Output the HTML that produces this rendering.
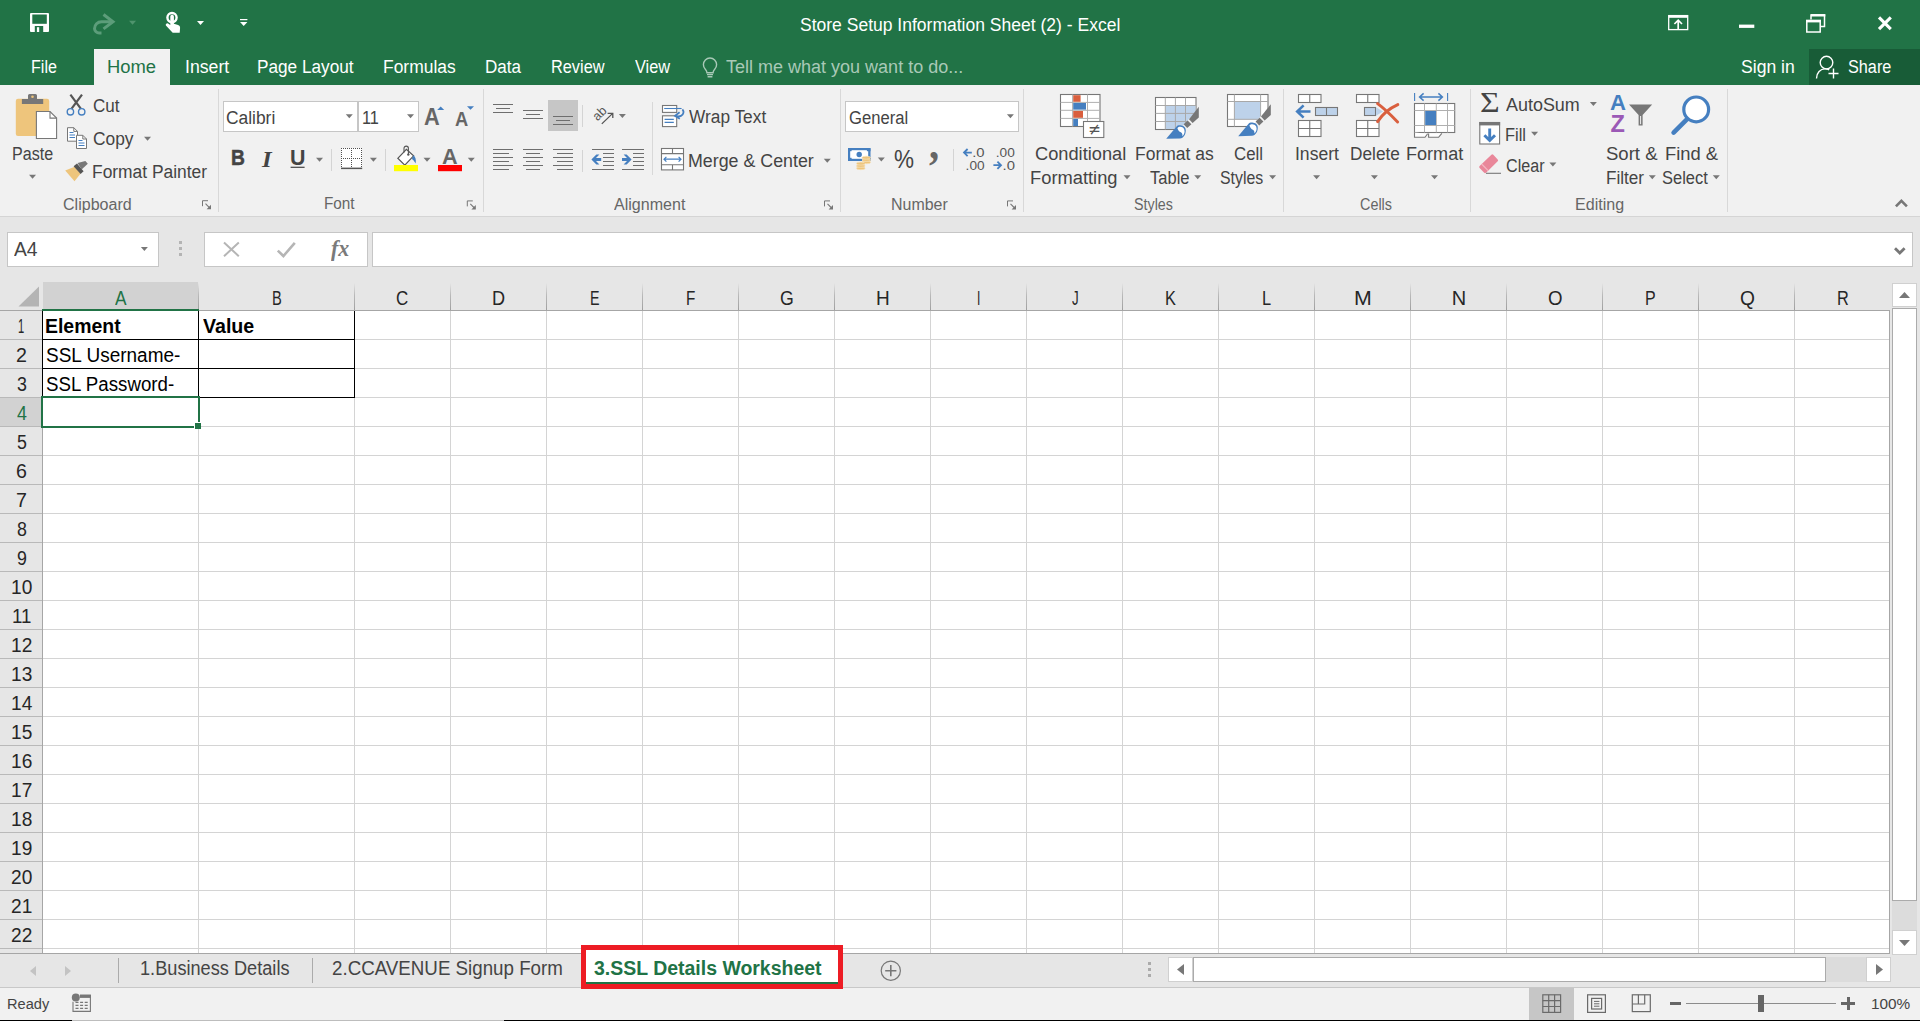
<!DOCTYPE html>
<html lang="en"><head><meta charset="utf-8"><title>Store Setup Information Sheet (2) - Excel</title>
<style>
html,body{margin:0;padding:0}
body{width:1920px;height:1021px;overflow:hidden;position:relative;background:#e6e6e6;font-family:"Liberation Sans",sans-serif}
#app{position:absolute;left:0;top:0;width:1920px;height:1021px;overflow:hidden}
#app div,#app svg{position:absolute;box-sizing:border-box}
.t{position:absolute;white-space:nowrap;line-height:1;transform-origin:0 0}
</style></head>
<body><div id="app">
<div style="left:0px;top:0px;width:1920px;height:85px;background:#217346;"></div>
<div style="left:94px;top:49px;width:76px;height:36px;background:#f1f1f1;"></div>
<div style="left:1809px;top:49px;width:111px;height:36px;background:#185c37;"></div>
<div style="left:0px;top:85px;width:1920px;height:131px;background:#f1f1f1;"></div>
<div style="left:0px;top:216px;width:1920px;height:1px;background:#d5d5d5;"></div>
<div style="left:218px;top:89px;width:1px;height:123px;background:#d8d8d8;"></div>
<div style="left:483px;top:89px;width:1px;height:123px;background:#d8d8d8;"></div>
<div style="left:840px;top:89px;width:1px;height:123px;background:#d8d8d8;"></div>
<div style="left:1023px;top:89px;width:1px;height:123px;background:#d8d8d8;"></div>
<div style="left:1283px;top:89px;width:1px;height:123px;background:#d8d8d8;"></div>
<div style="left:1470px;top:89px;width:1px;height:123px;background:#d8d8d8;"></div>
<div style="left:1727px;top:89px;width:1px;height:123px;background:#d8d8d8;"></div>
<div style="left:331px;top:149px;width:1px;height:22px;background:#d4d4d4;"></div>
<div style="left:385px;top:149px;width:1px;height:22px;background:#d4d4d4;"></div>
<div style="left:582px;top:105px;width:1px;height:22px;background:#d4d4d4;"></div>
<div style="left:582px;top:150px;width:1px;height:22px;background:#d4d4d4;"></div>
<div style="left:652px;top:102px;width:1px;height:73px;background:#d8d8d8;"></div>
<div style="left:953px;top:149px;width:1px;height:22px;background:#d4d4d4;"></div>
<div style="left:548px;top:100px;width:30px;height:31px;background:#c6c6c6;"></div>
<div style="left:223px;top:101px;width:135px;height:31px;background:#ffffff;border:1px solid #c6c6c6;"></div>
<div style="left:358px;top:101px;width:61px;height:31px;background:#ffffff;border:1px solid #c6c6c6;"></div>
<div style="left:845px;top:101px;width:174px;height:31px;background:#ffffff;border:1px solid #c6c6c6;"></div>
<div style="left:7px;top:232px;width:152px;height:35px;background:#ffffff;border:1px solid #c6c6c6;"></div>
<div style="left:204px;top:232px;width:164px;height:35px;background:#ffffff;border:1px solid #c6c6c6;"></div>
<div style="left:372px;top:232px;width:1541px;height:35px;background:#ffffff;border:1px solid #c6c6c6;"></div>
<div style="left:179px;top:241px;width:3px;height:3px;background:#b4b4b4;"></div>
<div style="left:179px;top:247px;width:3px;height:3px;background:#b4b4b4;"></div>
<div style="left:179px;top:253px;width:3px;height:3px;background:#b4b4b4;"></div>
<div style="left:43px;top:311px;width:1847px;height:642px;background:#ffffff;"></div>
<div style="left:43px;top:282px;width:155px;height:27px;background:#d2d2d2;"></div>
<div style="left:0px;top:398px;width:41px;height:28px;background:#d2d2d2;"></div>
<div style="left:43px;top:339px;width:1846px;height:1px;background:#d4d4d4;"></div>
<div style="left:0px;top:339px;width:42px;height:1px;background:#b9b9b9;"></div>
<div style="left:43px;top:368px;width:1846px;height:1px;background:#d4d4d4;"></div>
<div style="left:0px;top:368px;width:42px;height:1px;background:#b9b9b9;"></div>
<div style="left:43px;top:397px;width:1846px;height:1px;background:#d4d4d4;"></div>
<div style="left:0px;top:397px;width:42px;height:1px;background:#b9b9b9;"></div>
<div style="left:43px;top:426px;width:1846px;height:1px;background:#d4d4d4;"></div>
<div style="left:0px;top:426px;width:42px;height:1px;background:#b9b9b9;"></div>
<div style="left:43px;top:455px;width:1846px;height:1px;background:#d4d4d4;"></div>
<div style="left:0px;top:455px;width:42px;height:1px;background:#b9b9b9;"></div>
<div style="left:43px;top:484px;width:1846px;height:1px;background:#d4d4d4;"></div>
<div style="left:0px;top:484px;width:42px;height:1px;background:#b9b9b9;"></div>
<div style="left:43px;top:513px;width:1846px;height:1px;background:#d4d4d4;"></div>
<div style="left:0px;top:513px;width:42px;height:1px;background:#b9b9b9;"></div>
<div style="left:43px;top:542px;width:1846px;height:1px;background:#d4d4d4;"></div>
<div style="left:0px;top:542px;width:42px;height:1px;background:#b9b9b9;"></div>
<div style="left:43px;top:571px;width:1846px;height:1px;background:#d4d4d4;"></div>
<div style="left:0px;top:571px;width:42px;height:1px;background:#b9b9b9;"></div>
<div style="left:43px;top:600px;width:1846px;height:1px;background:#d4d4d4;"></div>
<div style="left:0px;top:600px;width:42px;height:1px;background:#b9b9b9;"></div>
<div style="left:43px;top:629px;width:1846px;height:1px;background:#d4d4d4;"></div>
<div style="left:0px;top:629px;width:42px;height:1px;background:#b9b9b9;"></div>
<div style="left:43px;top:658px;width:1846px;height:1px;background:#d4d4d4;"></div>
<div style="left:0px;top:658px;width:42px;height:1px;background:#b9b9b9;"></div>
<div style="left:43px;top:687px;width:1846px;height:1px;background:#d4d4d4;"></div>
<div style="left:0px;top:687px;width:42px;height:1px;background:#b9b9b9;"></div>
<div style="left:43px;top:716px;width:1846px;height:1px;background:#d4d4d4;"></div>
<div style="left:0px;top:716px;width:42px;height:1px;background:#b9b9b9;"></div>
<div style="left:43px;top:745px;width:1846px;height:1px;background:#d4d4d4;"></div>
<div style="left:0px;top:745px;width:42px;height:1px;background:#b9b9b9;"></div>
<div style="left:43px;top:774px;width:1846px;height:1px;background:#d4d4d4;"></div>
<div style="left:0px;top:774px;width:42px;height:1px;background:#b9b9b9;"></div>
<div style="left:43px;top:803px;width:1846px;height:1px;background:#d4d4d4;"></div>
<div style="left:0px;top:803px;width:42px;height:1px;background:#b9b9b9;"></div>
<div style="left:43px;top:832px;width:1846px;height:1px;background:#d4d4d4;"></div>
<div style="left:0px;top:832px;width:42px;height:1px;background:#b9b9b9;"></div>
<div style="left:43px;top:861px;width:1846px;height:1px;background:#d4d4d4;"></div>
<div style="left:0px;top:861px;width:42px;height:1px;background:#b9b9b9;"></div>
<div style="left:43px;top:890px;width:1846px;height:1px;background:#d4d4d4;"></div>
<div style="left:0px;top:890px;width:42px;height:1px;background:#b9b9b9;"></div>
<div style="left:43px;top:919px;width:1846px;height:1px;background:#d4d4d4;"></div>
<div style="left:0px;top:919px;width:42px;height:1px;background:#b9b9b9;"></div>
<div style="left:43px;top:948px;width:1846px;height:1px;background:#d4d4d4;"></div>
<div style="left:0px;top:948px;width:42px;height:1px;background:#b9b9b9;"></div>
<div style="left:198px;top:311px;width:1px;height:642px;background:#d4d4d4;"></div>
<div style="left:198px;top:283px;width:1px;height:27px;background:linear-gradient(#e6e6e6,#b9b9b9 45%,#9f9f9f);"></div>
<div style="left:354px;top:311px;width:1px;height:642px;background:#d4d4d4;"></div>
<div style="left:354px;top:283px;width:1px;height:27px;background:linear-gradient(#e6e6e6,#b9b9b9 45%,#9f9f9f);"></div>
<div style="left:450px;top:311px;width:1px;height:642px;background:#d4d4d4;"></div>
<div style="left:450px;top:283px;width:1px;height:27px;background:linear-gradient(#e6e6e6,#b9b9b9 45%,#9f9f9f);"></div>
<div style="left:546px;top:311px;width:1px;height:642px;background:#d4d4d4;"></div>
<div style="left:546px;top:283px;width:1px;height:27px;background:linear-gradient(#e6e6e6,#b9b9b9 45%,#9f9f9f);"></div>
<div style="left:642px;top:311px;width:1px;height:642px;background:#d4d4d4;"></div>
<div style="left:642px;top:283px;width:1px;height:27px;background:linear-gradient(#e6e6e6,#b9b9b9 45%,#9f9f9f);"></div>
<div style="left:738px;top:311px;width:1px;height:642px;background:#d4d4d4;"></div>
<div style="left:738px;top:283px;width:1px;height:27px;background:linear-gradient(#e6e6e6,#b9b9b9 45%,#9f9f9f);"></div>
<div style="left:834px;top:311px;width:1px;height:642px;background:#d4d4d4;"></div>
<div style="left:834px;top:283px;width:1px;height:27px;background:linear-gradient(#e6e6e6,#b9b9b9 45%,#9f9f9f);"></div>
<div style="left:930px;top:311px;width:1px;height:642px;background:#d4d4d4;"></div>
<div style="left:930px;top:283px;width:1px;height:27px;background:linear-gradient(#e6e6e6,#b9b9b9 45%,#9f9f9f);"></div>
<div style="left:1026px;top:311px;width:1px;height:642px;background:#d4d4d4;"></div>
<div style="left:1026px;top:283px;width:1px;height:27px;background:linear-gradient(#e6e6e6,#b9b9b9 45%,#9f9f9f);"></div>
<div style="left:1122px;top:311px;width:1px;height:642px;background:#d4d4d4;"></div>
<div style="left:1122px;top:283px;width:1px;height:27px;background:linear-gradient(#e6e6e6,#b9b9b9 45%,#9f9f9f);"></div>
<div style="left:1218px;top:311px;width:1px;height:642px;background:#d4d4d4;"></div>
<div style="left:1218px;top:283px;width:1px;height:27px;background:linear-gradient(#e6e6e6,#b9b9b9 45%,#9f9f9f);"></div>
<div style="left:1314px;top:311px;width:1px;height:642px;background:#d4d4d4;"></div>
<div style="left:1314px;top:283px;width:1px;height:27px;background:linear-gradient(#e6e6e6,#b9b9b9 45%,#9f9f9f);"></div>
<div style="left:1410px;top:311px;width:1px;height:642px;background:#d4d4d4;"></div>
<div style="left:1410px;top:283px;width:1px;height:27px;background:linear-gradient(#e6e6e6,#b9b9b9 45%,#9f9f9f);"></div>
<div style="left:1506px;top:311px;width:1px;height:642px;background:#d4d4d4;"></div>
<div style="left:1506px;top:283px;width:1px;height:27px;background:linear-gradient(#e6e6e6,#b9b9b9 45%,#9f9f9f);"></div>
<div style="left:1602px;top:311px;width:1px;height:642px;background:#d4d4d4;"></div>
<div style="left:1602px;top:283px;width:1px;height:27px;background:linear-gradient(#e6e6e6,#b9b9b9 45%,#9f9f9f);"></div>
<div style="left:1698px;top:311px;width:1px;height:642px;background:#d4d4d4;"></div>
<div style="left:1698px;top:283px;width:1px;height:27px;background:linear-gradient(#e6e6e6,#b9b9b9 45%,#9f9f9f);"></div>
<div style="left:1794px;top:311px;width:1px;height:642px;background:#d4d4d4;"></div>
<div style="left:1794px;top:283px;width:1px;height:27px;background:linear-gradient(#e6e6e6,#b9b9b9 45%,#9f9f9f);"></div>
<div style="left:0px;top:310px;width:1890px;height:1px;background:#a6a6a6;"></div>
<div style="left:42px;top:311px;width:1px;height:642px;background:#a6a6a6;"></div>
<div style="left:1889px;top:311px;width:1px;height:643px;background:#a6a6a6;"></div>
<div style="left:0px;top:953px;width:1890px;height:1px;background:#a6a6a6;"></div>
<div style="left:42px;top:339px;width:313px;height:1px;background:#000;"></div>
<div style="left:42px;top:368px;width:313px;height:1px;background:#000;"></div>
<div style="left:42px;top:397px;width:313px;height:1px;background:#000;"></div>
<div style="left:42px;top:311px;width:1px;height:87px;background:#000;"></div>
<div style="left:198px;top:311px;width:1px;height:87px;background:#000;"></div>
<div style="left:354px;top:311px;width:1px;height:87px;background:#000;"></div>
<div style="left:42px;top:309px;width:157px;height:2px;background:#217346;"></div>
<div style="left:41px;top:396px;width:159px;height:32px;border:2px solid #217346;"></div>
<div style="left:194px;top:422px;width:7px;height:7px;background:#217346;border:1px solid #fff;border-right:0;border-bottom:0;width:7px;height:7px;"></div>
<div style="left:1892px;top:283px;width:25px;height:24px;background:#ffffff;border:1px solid #d0d0d0;"></div>
<div style="left:1892px;top:308px;width:25px;height:593px;background:#ffffff;border:1px solid #ababab;"></div>
<div style="left:1892px;top:901px;width:25px;height:30px;background:#dcdcdc;"></div>
<div style="left:1892px;top:930px;width:25px;height:25px;background:#ffffff;border:1px solid #d0d0d0;"></div>
<div style="left:118px;top:958px;width:1px;height:25px;background:#ababab;"></div>
<div style="left:312px;top:958px;width:1px;height:25px;background:#ababab;"></div>
<div style="left:1168px;top:957px;width:25px;height:25px;background:#ffffff;border:1px solid #d0d0d0;"></div>
<div style="left:1193px;top:957px;width:633px;height:25px;background:#ffffff;border:1px solid #ababab;"></div>
<div style="left:1826px;top:957px;width:41px;height:25px;background:#dcdcdc;"></div>
<div style="left:1866px;top:957px;width:25px;height:25px;background:#ffffff;border:1px solid #d0d0d0;"></div>
<div style="left:1148px;top:962px;width:3px;height:3px;background:#ababab;"></div>
<div style="left:1148px;top:968px;width:3px;height:3px;background:#ababab;"></div>
<div style="left:1148px;top:974px;width:3px;height:3px;background:#ababab;"></div>
<div style="left:586px;top:950px;width:252px;height:32px;background:#ffffff;"></div>
<div style="left:586px;top:982px;width:252px;height:2px;background:#217346;"></div>
<div style="left:0px;top:987px;width:1920px;height:1px;background:#c8c8c8;"></div>
<div style="left:0px;top:988px;width:1920px;height:33px;background:#f1f1f1;"></div>
<div style="left:1529px;top:988px;width:45px;height:32px;background:#c6c6c6;"></div>
<div style="left:1686px;top:1003px;width:150px;height:1px;background:#8c8c8c;"></div>
<div style="left:1758px;top:995px;width:6px;height:17px;background:#666666;"></div>
<div style="left:1670px;top:1002px;width:11px;height:3px;background:#666666;"></div>
<div style="left:1841px;top:1002px;width:14px;height:3px;background:#666666;"></div>
<div style="left:1846.5px;top:997px;width:3px;height:13px;background:#666666;"></div>
<div style="left:581px;top:945px;width:262px;height:44px;border:5px solid #ed1c24;"></div>
<div style="left:0px;top:1020px;width:1920px;height:1px;background:#000000;"></div>
<div style="left:72px;top:1020px;width:432px;height:1px;background:#bdbdbd;"></div>
<svg style="left:18px;top:286px" width="22" height="21" viewBox="0 0 22 21"><path d="M21 0.5V20.5H0.5Z" fill="#b4b4b4"/></svg>
<svg style="left:1899px;top:292px" width="11" height="6" viewBox="0 0 11 6"><path d="M0 6H11L5.5 0Z" fill="#777"/></svg>
<svg style="left:1899px;top:940px" width="11" height="6" viewBox="0 0 11 6"><path d="M0 0H11L5.5 6Z" fill="#777"/></svg>
<svg style="left:1177px;top:964px" width="7" height="11" viewBox="0 0 7 11"><path d="M7 0V11L0 5.5Z" fill="#777"/></svg>
<svg style="left:1876px;top:964px" width="7" height="11" viewBox="0 0 7 11"><path d="M0 0V11L7 5.5Z" fill="#777"/></svg>
<svg style="left:30px;top:966px" width="6" height="10" viewBox="0 0 6 10"><path d="M6 0V10L0 5Z" fill="#c3c3c3"/></svg>
<svg style="left:65px;top:966px" width="6" height="10" viewBox="0 0 6 10"><path d="M0 0V10L6 5Z" fill="#c3c3c3"/></svg>
<svg style="left:0;top:0" width="1920" height="1021" viewBox="0 0 1920 1021">
<path d="M31 13h17a1 1 0 0 1 1 1v17a1 1 0 0 1-1 1h-17a1 1 0 0 1-1-1v-17a1 1 0 0 1 1-1z" fill="#fff"/>
<rect x="32.3" y="14.5" width="14.5" height="9.3" fill="#217346"/>
<rect x="34.8" y="26" width="8.4" height="6" fill="#217346"/><rect x="36.9" y="27.2" width="2.3" height="4.8" fill="#fff"/>
<path d="M103.5 14.5l9.5 7.2-9.5 7.2" fill="none" stroke="#5c9d7a" stroke-width="3"/><path d="M112 21.7h-10.5a7 7 0 0 0-7 7v0a4.6 4.6 0 0 0 4.6 4.2h2.4" fill="none" stroke="#5c9d7a" stroke-width="3"/>
<path d="M129.0 20.8h7l-3.5 4z" fill="#4f946d"/>
<circle cx="172" cy="17.6" r="4.6" fill="none" stroke="#fff" stroke-width="2.4"/><path d="M170.3 16.6a1.8 1.8 0 0 1 3.6 0v7.2l4.2 1.3a2.6 2.6 0 0 1 2 2.7l-.4 5h-7l-6.8-7.3a1.6 1.6 0 0 1 2.2-2.1l2.2 1.6z" fill="#fff"/>
<path d="M197.0 21.0h7l-3.5 4z" fill="#ffffff"/>
<rect x="240" y="19" width="7.4" height="1.2" fill="#fff"/><path d="M240 22h7.4l-3.7 4z" fill="#fff"/>
<rect x="1668.7" y="15.6" width="19" height="14" fill="none" stroke="#fff" stroke-width="1.3"/><rect x="1668.7" y="15.6" width="19" height="2.2" fill="#fff"/><path d="M1678.2 29.4v-9M1674.4 24l3.8-3.8 3.8 3.8" fill="none" stroke="#fff" stroke-width="1.7"/>
<rect x="1739" y="24.6" width="15.3" height="3.3" fill="#fff"/>
<path d="M1811 19.5v-4.6h13.5v11.5h-4" fill="none" stroke="#fff" stroke-width="1.5"/><rect x="1810.9" y="14.1" width="14.4" height="2.4" fill="#fff"/><rect x="1806.8" y="20.6" width="13.4" height="11.4" fill="none" stroke="#fff" stroke-width="1.5"/><rect x="1806" y="19.8" width="15" height="2.6" fill="#fff"/>
<path d="M1879 17.3l11.8 11.8M1890.8 17.3l-11.8 11.8" stroke="#fff" stroke-width="3.1" fill="none"/>
<path d="M705.3 69.2a6.6 6.6 0 1 1 9.4 0c-1 1.1-1.6 2-1.6 3.6h-6.2c0-1.6-.6-2.5-1.6-3.6z" fill="none" stroke="#a9c9b7" stroke-width="1.4"/><path d="M707 74.6h6M707.6 76.8h4.8" stroke="#a9c9b7" stroke-width="1.4"/>
<circle cx="1826.5" cy="62.6" r="6.3" fill="none" stroke="#fff" stroke-width="1.4"/><path d="M1816.5 78.5c0-6 4-9.6 8.5-9.6 1.6 0 3 .3 4.2 1" fill="none" stroke="#fff" stroke-width="1.4"/><path d="M1833.5 68.5v10M1828.5 73.5h10" stroke="#fff" stroke-width="1.4"/>
<rect x="15.8" y="98.7" width="33.4" height="37.2" rx="2.2" fill="#eec57c"/><path d="M28 99v-3.6a1.5 1.5 0 0 1 1.5-1.5h6a1.5 1.5 0 0 1 1.5 1.5v3.6h6.2v5h-21.3v-5z" fill="#777777"/><circle cx="32.5" cy="96.8" r="1.3" fill="#eec57c"/><path d="M36.4 111.5h13.6l6.6 6.6v20.4h-20.2z" fill="#fff" stroke="#777777" stroke-width="1.1"/><path d="M50 111.5v6.6h6.6" fill="none" stroke="#777777" stroke-width="1.1"/>
<path d="M29.0 174.8h7l-3.5 4z" fill="#777777"/>
<path d="M70.4 94.6l10.4 14M82 94.6l-10.4 14" stroke="#555555" stroke-width="2.2" fill="none"/><circle cx="70.4" cy="111.8" r="3.2" fill="none" stroke="#457fc0" stroke-width="1.4"/><circle cx="81.7" cy="111.8" r="3.2" fill="none" stroke="#457fc0" stroke-width="1.4"/>
<path d="M67.5 127.7h6.3l3.7 3.7v9.8h-10z" fill="#fff" stroke="#777777" stroke-width="1"/><path d="M73.8 127.7v3.7h3.7" fill="none" stroke="#777777" stroke-width="1"/><path d="M69.5 132.5h4M69.5 135h5.5M69.5 137.5h5.5" stroke="#457fc0" stroke-width="1"/><path d="M76.5 135.3h6.3l3.7 3.7v9.5h-10z" fill="#fff" stroke="#777777" stroke-width="1"/><path d="M82.8 135.3v3.7h3.7" fill="none" stroke="#777777" stroke-width="1"/><path d="M78.5 140.5h4M78.5 143h6M78.5 145.5h6" stroke="#457fc0" stroke-width="1"/>
<path d="M144.0 136.8h7l-3.5 4z" fill="#777777"/>
<path d="M65.2 170.5l9.5-3.7 6 6.8-6.2 7.6z" fill="#eec57c"/><path d="M73.6 166.2l3.4-2.6 6.6 7.6-3 2.8z" fill="#555555"/><path d="M77.6 163l7.8-2 2.4 2.8-6.2 5.8z" fill="#777777"/>
<path d="M202.5 206.2v-5.5h5.5" fill="none" stroke="#777777" stroke-width="1"/><path d="M205.5 203.7l4.6 4.6" stroke="#777777" stroke-width="1.1"/><path d="M211 204.79999999999998v4.4h-4.4z" fill="#777777"/>
<path d="M345.8 114.2h7l-3.5 4z" fill="#777777"/>
<path d="M407.0 114.2h7l-3.5 4z" fill="#777777"/>
<path d="M437.2 110l3.5-3.6 3.5 3.6z" fill="#457fc0"/><path d="M467 106.2h7l-3.5 3.6z" fill="#457fc0"/>
<rect x="290.6" y="166.7" width="14" height="1.2" fill="#444444"/>
<path d="M316.0 157.7h7l-3.5 4z" fill="#777777"/>
<path d="M369.9 157.7h7l-3.5 4z" fill="#777777"/>
<path d="M423.5 157.7h7l-3.5 4z" fill="#777777"/>
<path d="M467.8 157.7h7l-3.5 4z" fill="#777777"/>
<rect x="341" y="148" width="21" height="20" fill="#fff"/><path d="M341 148.5h21.5M341 158.5h21.5M341.5 148v20M351.5 148v20M361.5 148v20" stroke="#505050" stroke-width="1" stroke-dasharray="1 1" fill="none"/><rect x="341" y="167.6" width="21.2" height="1.5" fill="#555555"/>
<path d="M397.8 158.3l8.6-9 7.2 6.6-8.8 9.2z" fill="#fff" stroke="#555555" stroke-width="1.2"/><path d="M404 152.5v-4.2a2.2 2.2 0 0 1 4.4 0v6" fill="none" stroke="#555555" stroke-width="1.1"/><circle cx="408.3" cy="154.6" r="1.2" fill="#555555"/><path d="M413.6 155.2c1.8 1.6 2.8 4.4 2 8.2-1.2-2.2-2.2-3.4-3.8-4.4z" fill="#457fc0"/><rect x="394" y="165" width="24" height="6.2" fill="#ffff00"/>
<rect x="438" y="165" width="24" height="6.2" fill="#ff0000"/>
<path d="M467.3 206.4v-5.5h5.5" fill="none" stroke="#777777" stroke-width="1"/><path d="M470.3 203.9l4.6 4.6" stroke="#777777" stroke-width="1.1"/><path d="M475.8 205.0v4.4h-4.4z" fill="#777777"/>
<path d="M493 104.5h20M496 108.5h14M493 112.5h20" stroke="#6e6e6e" stroke-width="1" fill="none"/>
<path d="M523 110.5h20M526 114.5h14M523 118.5h20" stroke="#6e6e6e" stroke-width="1" fill="none"/>
<path d="M553 116.5h20M556 120.5h14M553 124.5h20" stroke="#6e6e6e" stroke-width="1" fill="none"/>
<text transform="translate(597.4 121.6) rotate(-45)" font-family="Liberation Sans, sans-serif" font-size="12.8" fill="#555555">ab</text><path d="M601.8 123.9l10.9-10.5M607.6 113.3h5.2v4.8" fill="none" stroke="#555555" stroke-width="1.3"/>
<path d="M618.9 114.0h7l-3.5 4z" fill="#777777"/>
<rect x="662.5" y="105.5" width="14.2" height="6.9" fill="#fff" stroke="#777777" stroke-width="1.1"/><rect x="662.5" y="115.8" width="14.2" height="10.8" fill="#fff" stroke="#777777" stroke-width="1.1"/><path d="M664.2 108.5h17.4" stroke="#457fc0" stroke-width="1.1"/><path d="M682.4 109.4c1.8 2 1.4 5.2-1.4 6.4-1.4.6-3 .6-4.6.2" fill="none" stroke="#457fc0" stroke-width="1.8"/><path d="M679.6 112.2l-4.6 3.6 4.8 3" fill="none" stroke="#457fc0" stroke-width="1.8"/><path d="M664.6 119.4h9.2M664.6 122.4h9.2" stroke="#457fc0" stroke-width="1.1"/>
<path d="M493 149.5h20M493 153.5h16M493 157.5h20M493 161.5h16M493 165.5h20M493 169.5h16" stroke="#6e6e6e" stroke-width="1" fill="none"/>
<path d="M523 149.5h20M526 153.5h14M523 157.5h20M526 161.5h14M523 165.5h20M526 169.5h14" stroke="#6e6e6e" stroke-width="1" fill="none"/>
<path d="M553 149.5h20M557 153.5h16M553 157.5h20M557 161.5h16M553 165.5h20M557 169.5h16" stroke="#6e6e6e" stroke-width="1" fill="none"/>
<path d="M592 149.5h22M603 153.5h11M603 157.5h11M603 161.5h11M603 165.5h11M592 169.5h22" stroke="#6e6e6e" stroke-width="1" fill="none"/>
<path d="M591.4 159.5l5-5h3l-3.4 3.5h5.2v3h-5.2l3.4 3.5h-3z" fill="#457fc0"/>
<path d="M622 149.5h22M633 153.5h11M633 157.5h11M633 161.5h11M633 165.5h11M622 169.5h22" stroke="#6e6e6e" stroke-width="1" fill="none"/>
<path d="M631.6 159.5l-5-5h-3l3.4 3.5h-5v3h5l-3.4 3.5h3z" fill="#457fc0"/>
<rect x="661.5" y="148.5" width="22" height="21.4" fill="#fff" stroke="#777777" stroke-width="1.1"/><path d="M661.5 153.6h22M661.5 164.8h22M672.5 148.5v5.1M672.5 164.8v5.1" stroke="#777777" stroke-width="1.1"/><path d="M664 159.2h17M666.4 156.8l-2.4 2.4 2.4 2.4M678.6 156.8l2.4 2.4-2.4 2.4" fill="none" stroke="#457fc0" stroke-width="1.2"/>
<path d="M823.8 158.8h7l-3.5 4z" fill="#777777"/>
<path d="M824.5 206.4v-5.5h5.5" fill="none" stroke="#777777" stroke-width="1"/><path d="M827.5 203.9l4.6 4.6" stroke="#777777" stroke-width="1.1"/><path d="M833 205.0v4.4h-4.4z" fill="#777777"/>
<path d="M1006.9 114.2h7l-3.5 4z" fill="#777777"/>
<rect x="848" y="148" width="22.5" height="13" rx=".8" fill="#457fc0"/><rect x="850.2" y="150.2" width="18" height="8.6" fill="#fff"/><circle cx="859.2" cy="154.5" r="2.7" fill="#457fc0"/><rect x="848" y="148" width="3.6" height="3.2" fill="#457fc0"/><rect x="866.9" y="148" width="3.6" height="3.2" fill="#457fc0"/><rect x="848" y="157.8" width="3.6" height="3.2" fill="#457fc0"/><rect x="866.9" y="157.8" width="3.6" height="3.2" fill="#457fc0"/><g fill="#eec57c" stroke="#f7e3bd" stroke-width=".7"><ellipse cx="866.3" cy="162.3" rx="4.3" ry="1.5"/><ellipse cx="866.3" cy="160" rx="4.3" ry="1.5"/><ellipse cx="866.3" cy="157.7" rx="4.3" ry="1.5"/><ellipse cx="860.8" cy="168.2" rx="4.3" ry="1.5"/><ellipse cx="860.8" cy="165.9" rx="4.3" ry="1.5"/><ellipse cx="860.8" cy="163.6" rx="4.3" ry="1.5"/></g>
<path d="M877.8 157.4h7l-3.5 4z" fill="#777777"/>
<text x="972.2" y="157.2" font-family="Liberation Sans, sans-serif" font-size="13" fill="#555555" textLength="12.4" lengthAdjust="spacingAndGlyphs">.0</text>
<text x="965.6" y="169.6" font-family="Liberation Sans, sans-serif" font-size="13" fill="#555555" textLength="19" lengthAdjust="spacingAndGlyphs">.00</text>
<path d="M971.8 152.6h-7.6M967.6 149l-3.6 3.6 3.6 3.6" fill="none" stroke="#457fc0" stroke-width="1.8"/>
<text x="995.8" y="157.2" font-family="Liberation Sans, sans-serif" font-size="13" fill="#555555" textLength="19" lengthAdjust="spacingAndGlyphs">.00</text>
<text x="1002.6" y="169.6" font-family="Liberation Sans, sans-serif" font-size="13" fill="#555555" textLength="12.4" lengthAdjust="spacingAndGlyphs">.0</text>
<path d="M993.4 165.2h7.6M997.4 161.6l3.6 3.6-3.6 3.6" fill="none" stroke="#457fc0" stroke-width="1.8"/>
<path d="M1007.5 206.4v-5.5h5.5" fill="none" stroke="#777777" stroke-width="1"/><path d="M1010.5 203.9l4.6 4.6" stroke="#777777" stroke-width="1.1"/><path d="M1016 205.0v4.4h-4.4z" fill="#777777"/>
<rect x="1060.5" y="94.5" width="39.5" height="32" fill="#fff" stroke="#777777" stroke-width="1.1"/><path d="M1060.5 102.4h39.5M1060.5 110.3h39.5M1060.5 118.4h39.5M1072.6 94.5v32M1087.5 94.5v32" stroke="#b0b0b0" stroke-width="1"/><rect x="1073.2" y="95.2" width="7.4" height="6.6" fill="#d95f3e"/><rect x="1073.2" y="103" width="12.8" height="6.6" fill="#457fc0"/><rect x="1073.2" y="111" width="9.8" height="6.8" fill="#d95f3e"/><rect x="1073.2" y="119" width="4.8" height="7" fill="#457fc0"/><rect x="1083.5" y="121.5" width="20.3" height="16" fill="#fff" stroke="#777777" stroke-width="1.1"/>
<path d="M1123.5 175.2h7l-3.5 4z" fill="#777777"/>
<rect x="1155.5" y="97.5" width="40.5" height="32" fill="#fff" stroke="#777777" stroke-width="1.1"/><rect x="1165.3" y="105.5" width="30.2" height="23.5" fill="#bdd2ea"/><path d="M1155.5 105.5h40.5M1155.5 113.4h40.5M1155.5 121.5h40.5M1165.3 97.5v32M1175.4 97.5v32M1185.5 97.5v32" stroke="#a8a8a8" stroke-width="1"/><path d="M1178 131l22-24v25z" fill="#f1f1f1"/>
<path d="M1166.2 138.8L1176.6 126.4C1178.0 124.8 1179.8 125.2 1181.4 125.4C1184.2 125.8 1186.0 127.8 1185.8 130.4C1185.6 134.4 1183.8 138.0 1180.0 138.4Z" fill="#457fc0"/><path d="M1177.4 128.2C1178.8 126.2 1182.6 126.2 1184.2 129.2C1185.2 131.6 1184.4 134.6 1182.4 136.2C1182.8 133.4 1181.2 132.2 1179.8 131.8C1178.8 131.4 1178.2 129.8 1177.4 128.2Z" fill="#fff"/><path d="M1183.6 124.2l4-3.8 3.8 3.8-4.2 3.8z" fill="#777777"/><path d="M1189 119.2l9.8-12.4v10.8l-6.2 5.4z" fill="#777777"/>
<path d="M1194.2 175.2h7l-3.5 4z" fill="#777777"/>
<rect x="1227.5" y="94.5" width="40.5" height="32" fill="#fff" stroke="#777777" stroke-width="1.1"/><rect x="1234.4" y="101.5" width="26.2" height="17.8" fill="#bdd2ea"/><path d="M1227.5 101.5h40.5M1227.5 119.3h40.5M1234.4 94.5v32M1260.6 94.5v32" stroke="#a8a8a8" stroke-width="1"/><path d="M1250 128l22-24v25z" fill="#f1f1f1"/>
<path d="M1238.2 136.2L1248.6 123.8C1250.0 122.2 1251.8 122.6 1253.4 122.8C1256.2 123.2 1258.0 125.2 1257.8 127.8C1257.6 131.8 1255.8 135.4 1252.0 135.8Z" fill="#457fc0"/><path d="M1249.4 125.6C1250.8 123.6 1254.6 123.6 1256.2 126.6C1257.2 129.0 1256.4 132.0 1254.4 133.6C1254.8 130.8 1253.2 129.6 1251.8 129.2C1250.8 128.8 1250.2 127.2 1249.4 125.6Z" fill="#fff"/><path d="M1255.6 121.6l4-3.8 3.8 3.8-4.2 3.8z" fill="#777777"/><path d="M1261 116.6l9.8-12.4v10.8l-6.2 5.4z" fill="#777777"/>
<path d="M1269.1 175.2h7l-3.5 4z" fill="#777777"/>
<rect x="1298.5" y="94.5" width="22.5" height="8" fill="#fff" stroke="#777777" stroke-width="1.1"/><path d="M1309.75 94.5v8" stroke="#777777" stroke-width="1.1"/>
<rect x="1315.5" y="107.5" width="22" height="8" fill="#bdd2ea" stroke="#777777" stroke-width="1.1"/><path d="M1326.5 107.5v8" stroke="#777777" stroke-width="1.1"/>
<rect x="1298.5" y="120.5" width="22.5" height="16" fill="#fff" stroke="#777777" stroke-width="1.1"/><path d="M1309.75 120.5v16M1298.5 128.5h22.5" stroke="#777777" stroke-width="1.1"/>
<path d="M1310.5 111.5h-13M1303.6 105.4l-6.4 6.1 6.4 6.1" fill="none" stroke="#457fc0" stroke-width="2.6"/>
<path d="M1313.1 175.2h7l-3.5 4z" fill="#777777"/>
<rect x="1356.5" y="94.5" width="22.5" height="8" fill="#fff" stroke="#777777" stroke-width="1.1"/><path d="M1367.75 94.5v8" stroke="#777777" stroke-width="1.1"/>
<rect x="1364.5" y="107.5" width="11" height="8" fill="#bdd2ea" stroke="#777777" stroke-width="1.1"/><path d="M1376 107.2l7 4.3-7 4.3z" fill="#bdd2ea"/>
<rect x="1356.5" y="120.5" width="22.5" height="16" fill="#fff" stroke="#777777" stroke-width="1.1"/><path d="M1367.75 120.5v16M1356.5 128.5h22.5" stroke="#777777" stroke-width="1.1"/>
<path d="M1377.6 103.6c6 4.4 13 11 20 18.4M1397.8 104.6c-8 3.6-15.4 9.6-20.2 17" fill="none" stroke="#d95f3e" stroke-width="3" stroke-linecap="round"/>
<path d="M1370.9 175.2h7l-3.5 4z" fill="#777777"/>
<path d="M1414.6 93v8M1447.6 93v8" stroke="#457fc0" stroke-width="1.1"/><path d="M1419.5 97h23M1423.6 93.4l-4 3.6 4 3.6M1438.4 93.4l4 3.6-4 3.6" fill="none" stroke="#457fc0" stroke-width="1.5"/><rect x="1414.5" y="103.5" width="40.2" height="29" fill="#fff" stroke="#777777" stroke-width="1.1"/><path d="M1414.5 110.5h40.2M1414.5 125.5h40.2M1424.5 103.5v29M1436.3 103.5v29M1447.5 103.5v29" stroke="#b0b0b0" stroke-width="1"/><rect x="1425.2" y="111" width="10.8" height="14" fill="#457fc0"/><path d="M1414.5 132.5v4.8h10.5l2.6-3.6M1428.6 133.5v3.8h10l3.2-4" fill="#fff" stroke="#777777" stroke-width="1.1"/>
<path d="M1431.0 175.2h7l-3.5 4z" fill="#777777"/>
<path d="M1589.9 101.9h7l-3.5 4z" fill="#777777"/>
<rect x="1479.8" y="122.5" width="19.8" height="21.5" fill="#fff" stroke="#777777" stroke-width="1.1"/><rect x="1479.3" y="122" width="20.8" height="3.4" fill="#777777"/><path d="M1489.7 128.4v12M1484.4 135.2l5.3 5.3 5.3-5.3" fill="none" stroke="#457fc0" stroke-width="2.9"/>
<path d="M1531.1 131.8h7l-3.5 4z" fill="#777777"/>
<path d="M1479.6 166l11.8-11.2a1.4 1.4 0 0 1 1.9 0l4.4 4.6a1.4 1.4 0 0 1 0 1.9l-11.6 11.4a1.4 1.4 0 0 1-1.9 0l-4.6-4.8a1.4 1.4 0 0 1 0-1.9z" fill="#e9879a"/><path d="M1481.6 164l6.6 6.6" stroke="#f4b6c2" stroke-width="1.3"/><path d="M1486 173.3h15" stroke="#777777" stroke-width="1.1"/>
<path d="M1549.4 162.6h7l-3.5 4z" fill="#777777"/>
<text x="1609.9" y="110.3" font-family="Liberation Sans, sans-serif" font-size="22.6" font-weight="700" fill="#457fc0" textLength="16" lengthAdjust="spacingAndGlyphs">A</text><text x="1610.4" y="132" font-family="Liberation Sans, sans-serif" font-size="24" font-weight="700" fill="#9b59b6" textLength="14.4" lengthAdjust="spacingAndGlyphs">Z</text><path d="M1629 104.4h23.2l-9.6 10.6v10.4h-4v-10.4z" fill="#777777"/><path d="M1640.6 116v8.2" stroke="#f1f1f1" stroke-width="1"/>
<path d="M1648.8 175.2h7l-3.5 4z" fill="#777777"/>
<circle cx="1696.2" cy="109.4" r="12.4" fill="#fff" stroke="#457fc0" stroke-width="3.2"/><path d="M1686.6 119.6l-13 13" stroke="#457fc0" stroke-width="4.6" stroke-linecap="round"/>
<path d="M1712.8 175.2h7l-3.5 4z" fill="#777777"/>
<path d="M1895.9 206.3l5.5-5.5 5.5 5.5" fill="none" stroke="#777777" stroke-width="2.6"/>
<path d="M140.9 246.9h7l-3.5 4z" fill="#777777"/>
<path d="M224 242.6l14.8 13.6M238.8 242.6l-14.8 13.6" stroke="#b5b5b5" stroke-width="2" fill="none"/>
<path d="M277.8 250.6l5.6 5.4 11.4-13.2" stroke="#b5b5b5" stroke-width="2.6" fill="none"/>
<path d="M1895 248.2l4.8 4.8 4.8-4.8" fill="none" stroke="#777777" stroke-width="2.8"/>
<circle cx="890.8" cy="970.7" r="9.6" fill="none" stroke="#777777" stroke-width="1.2"/><path d="M885.2 970.7h11.2M890.8 965.1v11.2" stroke="#777777" stroke-width="1.6"/>
<circle cx="75.8" cy="997.6" r="4" fill="#777777"/><path d="M80 995.2h10.4v16.2h-17.4v-9.6" fill="none" stroke="#777777" stroke-width="1.1"/><rect x="80" y="994.7" width="10.9" height="3.2" fill="#777777"/><path d="M75.5 1002.4h13M75.5 1005.4h13M75.5 1008.4h13" stroke="#777777" stroke-width="1.1" stroke-dasharray="3 1.6"/>
<rect x="1542.8" y="994.8" width="17.8" height="17.6" fill="none" stroke="#6a6a6a" stroke-width="1.2"/><path d="M1542.8 1000.7h17.8M1542.8 1006.5h17.8M1548.7 994.8v17.6M1554.6 994.8v17.6" stroke="#6a6a6a" stroke-width="1.2"/>
<rect x="1587.6" y="994.8" width="17.8" height="17.6" fill="none" stroke="#6a6a6a" stroke-width="1.2"/><rect x="1591.6" y="998.4" width="10" height="10.6" fill="none" stroke="#6a6a6a" stroke-width="1.2"/><path d="M1594 1001.4h5.4M1594 1003.8h5.4M1594 1006.2h5.4" stroke="#6a6a6a" stroke-width="1"/>
<rect x="1632.3" y="994.8" width="18" height="16.8" fill="none" stroke="#6a6a6a" stroke-width="1.2"/><path d="M1632.3 1004h12.4v-9.2M1638.4 994.8v9.2" fill="none" stroke="#6a6a6a" stroke-width="1.2"/>
</svg>
<span class="t" style="left:799.70px;top:16.26px;font-size:18px;color:#ffffff;transform:scaleX(0.9730);">Store Setup Information Sheet (2) - Excel</span>
<span class="t" style="left:31.01px;top:57.96px;font-size:18px;color:#ffffff;transform:scaleX(0.8931);">File</span>
<span class="t" style="left:106.98px;top:57.96px;font-size:18px;color:#217346;transform:scaleX(1.0212);">Home</span>
<span class="t" style="left:184.72px;top:57.96px;font-size:18px;color:#ffffff;transform:scaleX(0.9814);">Insert</span>
<span class="t" style="left:257.34px;top:57.96px;font-size:18px;color:#ffffff;transform:scaleX(0.9562);">Page Layout</span>
<span class="t" style="left:382.53px;top:57.96px;font-size:18px;color:#ffffff;transform:scaleX(0.9687);">Formulas</span>
<span class="t" style="left:484.65px;top:57.96px;font-size:18px;color:#ffffff;transform:scaleX(0.9471);">Data</span>
<span class="t" style="left:550.59px;top:57.96px;font-size:18px;color:#ffffff;transform:scaleX(0.9065);">Review</span>
<span class="t" style="left:634.70px;top:57.96px;font-size:18px;color:#ffffff;transform:scaleX(0.9095);">View</span>
<span class="t" style="left:726.00px;top:57.96px;font-size:18px;color:#a9c9b7;transform:scaleX(1.0003);">Tell me what you want to do...</span>
<span class="t" style="left:1740.60px;top:57.96px;font-size:18px;color:#ffffff;transform:scaleX(0.9773);">Sign in</span>
<span class="t" style="left:1847.80px;top:57.96px;font-size:18px;color:#ffffff;transform:scaleX(0.9017);">Share</span>
<span class="t" style="left:11.71px;top:145.06px;font-size:18px;color:#444444;transform:scaleX(0.8930);">Paste</span>
<span class="t" style="left:92.50px;top:97.36px;font-size:18px;color:#444444;transform:scaleX(0.9461);">Cut</span>
<span class="t" style="left:92.50px;top:130.26px;font-size:18px;color:#444444;transform:scaleX(0.9638);">Copy</span>
<span class="t" style="left:92.03px;top:163.36px;font-size:18px;color:#444444;transform:scaleX(0.9666);">Format Painter</span>
<span class="t" style="left:63.20px;top:196.86px;font-size:16px;color:#666666;transform:scaleX(1.0032);">Clipboard</span>
<span class="t" style="left:226.30px;top:108.76px;font-size:18px;color:#444444;transform:scaleX(0.9658);">Calibri</span>
<span class="t" style="left:361.69px;top:108.76px;font-size:18px;color:#444444;transform:scaleX(0.9052);">11</span>
<span class="t" style="left:323.84px;top:196.46px;font-size:16px;color:#666666;transform:scaleX(0.9566);">Font</span>
<span class="t" style="left:230.75px;top:146.65px;font-size:22.5px;color:#444444;transform:scaleX(0.8533);font-weight:700;-webkit-text-stroke:.5px #444;">B</span>
<span class="t" style="left:261.63px;top:146.60px;font-size:24px;color:#444444;transform:scaleX(1.0333);font-weight:700;font-style:italic;font-family:'Liberation Serif', serif;">I</span>
<span class="t" style="left:289.83px;top:146.88px;font-size:22px;color:#444444;transform:scaleX(0.9714);font-weight:700;">U</span>
<span class="t" style="left:424.00px;top:105.26px;font-size:24.5px;color:#666666;transform:scaleX(0.8889);font-weight:700;">A</span>
<span class="t" style="left:454.70px;top:109.07px;font-size:20px;color:#666666;transform:scaleX(0.9143);font-weight:700;">A</span>
<span class="t" style="left:442.20px;top:145.95px;font-size:22.5px;color:#666666;transform:scaleX(0.9625);font-weight:700;">A</span>
<span class="t" style="left:688.70px;top:108.26px;font-size:18px;color:#444444;transform:scaleX(0.9604);">Wrap Text</span>
<span class="t" style="left:688.01px;top:151.96px;font-size:18px;color:#444444;transform:scaleX(0.9900);">Merge &amp; Center</span>
<span class="t" style="left:614.30px;top:196.86px;font-size:16px;color:#666666;transform:scaleX(1.0027);">Alignment</span>
<span class="t" style="left:848.50px;top:109.16px;font-size:18px;color:#444444;transform:scaleX(0.9233);">General</span>
<span class="t" style="left:893.80px;top:147.34px;font-size:25px;color:#444444;transform:scaleX(0.9000);">%</span>
<span class="t" style="left:890.90px;top:196.86px;font-size:16px;color:#666666;transform:scaleX(0.9969);">Number</span>
<span class="t" style="left:1035.40px;top:144.86px;font-size:18px;color:#444444;transform:scaleX(1.0128);">Conditional</span>
<span class="t" style="left:1030.18px;top:168.96px;font-size:18px;color:#444444;transform:scaleX(1.0177);">Formatting</span>
<span class="t" style="left:1134.83px;top:144.86px;font-size:18px;color:#444444;transform:scaleX(0.9710);">Format as</span>
<span class="t" style="left:1149.50px;top:168.96px;font-size:18px;color:#444444;transform:scaleX(0.9182);">Table</span>
<span class="t" style="left:1234.00px;top:144.86px;font-size:18px;color:#444444;transform:scaleX(0.9331);">Cell</span>
<span class="t" style="left:1219.80px;top:168.96px;font-size:18px;color:#444444;transform:scaleX(0.8813);">Styles</span>
<span class="t" style="left:1133.50px;top:196.86px;font-size:16px;color:#666666;transform:scaleX(0.8928);">Styles</span>
<span class="t" style="left:1294.83px;top:144.86px;font-size:18px;color:#444444;transform:scaleX(0.9746);">Insert</span>
<span class="t" style="left:1349.94px;top:144.86px;font-size:18px;color:#444444;transform:scaleX(0.9584);">Delete</span>
<span class="t" style="left:1405.80px;top:144.86px;font-size:18px;color:#444444;transform:scaleX(1.0035);">Format</span>
<span class="t" style="left:1360.00px;top:196.86px;font-size:16px;color:#666666;transform:scaleX(0.8998);">Cells</span>
<span class="t" style="left:1505.70px;top:95.66px;font-size:18px;color:#444444;transform:scaleX(0.9966);">AutoSum</span>
<span class="t" style="left:1505.39px;top:126.16px;font-size:18px;color:#444444;transform:scaleX(0.9146);">Fill</span>
<span class="t" style="left:1505.70px;top:157.36px;font-size:18px;color:#444444;transform:scaleX(0.8949);">Clear</span>
<span class="t" style="left:1605.50px;top:144.86px;font-size:18px;color:#444444;transform:scaleX(1.0297);">Sort &amp;</span>
<span class="t" style="left:1605.95px;top:168.96px;font-size:18px;color:#444444;transform:scaleX(0.9512);">Filter</span>
<span class="t" style="left:1664.78px;top:144.86px;font-size:18px;color:#444444;transform:scaleX(1.0212);">Find &amp;</span>
<span class="t" style="left:1662.40px;top:168.96px;font-size:18px;color:#444444;transform:scaleX(0.9155);">Select</span>
<span class="t" style="left:1574.60px;top:196.86px;font-size:16px;color:#666666;transform:scaleX(1.0038);">Editing</span>
<span class="t" style="left:14.20px;top:240.19px;font-size:19.5px;color:#444444;transform:scaleX(0.9872);">A4</span>
<span class="t" style="left:330.60px;top:236.94px;font-size:23px;color:#7a7a7a;transform:scaleX(0.9540);font-weight:700;font-style:italic;font-family:'Liberation Serif', serif;">fx</span>
<span class="t" style="left:114.60px;top:287.77px;font-size:20px;color:#217346;transform:scaleX(0.8643);">A</span>
<span class="t" style="left:271.77px;top:287.77px;font-size:20px;color:#262626;transform:scaleX(0.7333);">B</span>
<span class="t" style="left:396.35px;top:287.77px;font-size:20px;color:#262626;transform:scaleX(0.8462);">C</span>
<span class="t" style="left:491.89px;top:287.77px;font-size:20px;color:#262626;transform:scaleX(0.9077);">D</span>
<span class="t" style="left:589.68px;top:287.77px;font-size:20px;color:#262626;transform:scaleX(0.7167);">E</span>
<span class="t" style="left:685.74px;top:287.77px;font-size:20px;color:#262626;transform:scaleX(0.7636);">F</span>
<span class="t" style="left:779.61px;top:287.77px;font-size:20px;color:#262626;transform:scaleX(0.8857);">G</span>
<span class="t" style="left:876.05px;top:287.77px;font-size:20px;color:#262626;transform:scaleX(0.9500);">H</span>
<span class="t" style="left:977.20px;top:287.77px;font-size:20px;color:#262626;transform:scaleX(0.6000);">I</span>
<span class="t" style="left:1071.70px;top:287.77px;font-size:20px;color:#262626;transform:scaleX(0.6667);">J</span>
<span class="t" style="left:1164.58px;top:287.77px;font-size:20px;color:#262626;transform:scaleX(0.8154);">K</span>
<span class="t" style="left:1261.78px;top:287.77px;font-size:20px;color:#262626;transform:scaleX(0.8200);">L</span>
<span class="t" style="left:1353.63px;top:287.77px;font-size:20px;color:#262626;transform:scaleX(1.0667);">M</span>
<span class="t" style="left:1451.70px;top:287.77px;font-size:20px;color:#262626;transform:scaleX(1.0000);">N</span>
<span class="t" style="left:1547.70px;top:287.77px;font-size:20px;color:#262626;transform:scaleX(0.9333);">O</span>
<span class="t" style="left:1645.10px;top:287.77px;font-size:20px;color:#262626;transform:scaleX(0.8000);">P</span>
<span class="t" style="left:1739.50px;top:287.77px;font-size:20px;color:#262626;transform:scaleX(0.9600);">Q</span>
<span class="t" style="left:1836.58px;top:287.77px;font-size:20px;color:#262626;transform:scaleX(0.8154);">R</span>
<span class="t" style="left:18.44px;top:315.87px;font-size:20px;color:#262626;transform:scaleX(0.5600);">1</span>
<span class="t" style="left:15.92px;top:344.87px;font-size:20px;color:#262626;transform:scaleX(0.9800);">2</span>
<span class="t" style="left:16.90px;top:373.87px;font-size:20px;color:#262626;transform:scaleX(0.8909);">3</span>
<span class="t" style="left:16.90px;top:402.87px;font-size:20px;color:#217346;transform:scaleX(0.8909);">4</span>
<span class="t" style="left:16.90px;top:431.87px;font-size:20px;color:#262626;transform:scaleX(0.8909);">5</span>
<span class="t" style="left:15.92px;top:460.87px;font-size:20px;color:#262626;transform:scaleX(0.9800);">6</span>
<span class="t" style="left:15.92px;top:489.87px;font-size:20px;color:#262626;transform:scaleX(0.9800);">7</span>
<span class="t" style="left:16.90px;top:518.87px;font-size:20px;color:#262626;transform:scaleX(0.8909);">8</span>
<span class="t" style="left:16.90px;top:547.87px;font-size:20px;color:#262626;transform:scaleX(0.8909);">9</span>
<span class="t" style="left:10.74px;top:576.87px;font-size:20px;color:#262626;transform:scaleX(0.9563);">10</span>
<span class="t" style="left:11.66px;top:605.87px;font-size:20px;color:#262626;transform:scaleX(0.9369);">11</span>
<span class="t" style="left:10.74px;top:634.87px;font-size:20px;color:#262626;transform:scaleX(0.9563);">12</span>
<span class="t" style="left:10.74px;top:663.87px;font-size:20px;color:#262626;transform:scaleX(0.9563);">13</span>
<span class="t" style="left:10.74px;top:692.87px;font-size:20px;color:#262626;transform:scaleX(0.9563);">14</span>
<span class="t" style="left:10.74px;top:721.87px;font-size:20px;color:#262626;transform:scaleX(0.9563);">15</span>
<span class="t" style="left:10.74px;top:750.87px;font-size:20px;color:#262626;transform:scaleX(0.9563);">16</span>
<span class="t" style="left:10.74px;top:779.87px;font-size:20px;color:#262626;transform:scaleX(0.9563);">17</span>
<span class="t" style="left:10.74px;top:808.87px;font-size:20px;color:#262626;transform:scaleX(0.9563);">18</span>
<span class="t" style="left:10.74px;top:837.87px;font-size:20px;color:#262626;transform:scaleX(0.9563);">19</span>
<span class="t" style="left:10.74px;top:866.87px;font-size:20px;color:#262626;transform:scaleX(0.9563);">20</span>
<span class="t" style="left:10.74px;top:895.87px;font-size:20px;color:#262626;transform:scaleX(0.9563);">21</span>
<span class="t" style="left:10.74px;top:924.87px;font-size:20px;color:#262626;transform:scaleX(0.9563);">22</span>
<span class="t" style="left:45.33px;top:315.87px;font-size:20px;color:#000;transform:scaleX(0.9722);font-weight:700;">Element</span>
<span class="t" style="left:202.50px;top:315.87px;font-size:20px;color:#000;transform:scaleX(0.9802);font-weight:700;">Value</span>
<span class="t" style="left:46.00px;top:344.77px;font-size:20px;color:#000;transform:scaleX(0.9491);">SSL Username-</span>
<span class="t" style="left:46.00px;top:373.67px;font-size:20px;color:#000;transform:scaleX(0.9346);">SSL Password-</span>
<span class="t" style="left:140.17px;top:958.89px;font-size:19.5px;color:#444;transform:scaleX(0.9320);">1.Business Details</span>
<span class="t" style="left:331.70px;top:958.89px;font-size:19.5px;color:#444;transform:scaleX(0.9612);">2.CCAVENUE Signup Form</span>
<span class="t" style="left:593.70px;top:958.79px;font-size:19.5px;color:#217346;transform:scaleX(0.9982);font-weight:700;">3.SSL Details Worksheet</span>
<span class="t" style="left:6.76px;top:995.68px;font-size:15.5px;color:#444;transform:scaleX(0.9420);">Ready</span>
<span class="t" style="left:1871.21px;top:995.58px;font-size:15.5px;color:#444;transform:scaleX(0.9907);">100%</span>
<span class="t" style="left:1479.85px;top:87.79px;font-size:29.5px;color:#444444;transform:scaleX(1.1467);font-family:'Liberation Serif', serif;">Σ</span>
<span class="t" style="left:1087.50px;top:121.11px;font-size:17px;color:#555555;transform:scaleX(0.9000);font-family:'DejaVu Sans', sans-serif;">≠</span>
<span class="t" style="left:929.20px;top:122.65px;font-size:44px;color:#666666;transform:scaleX(0.9200);font-weight:700;font-family:'Liberation Serif', serif;">,</span>
</div></body></html>
